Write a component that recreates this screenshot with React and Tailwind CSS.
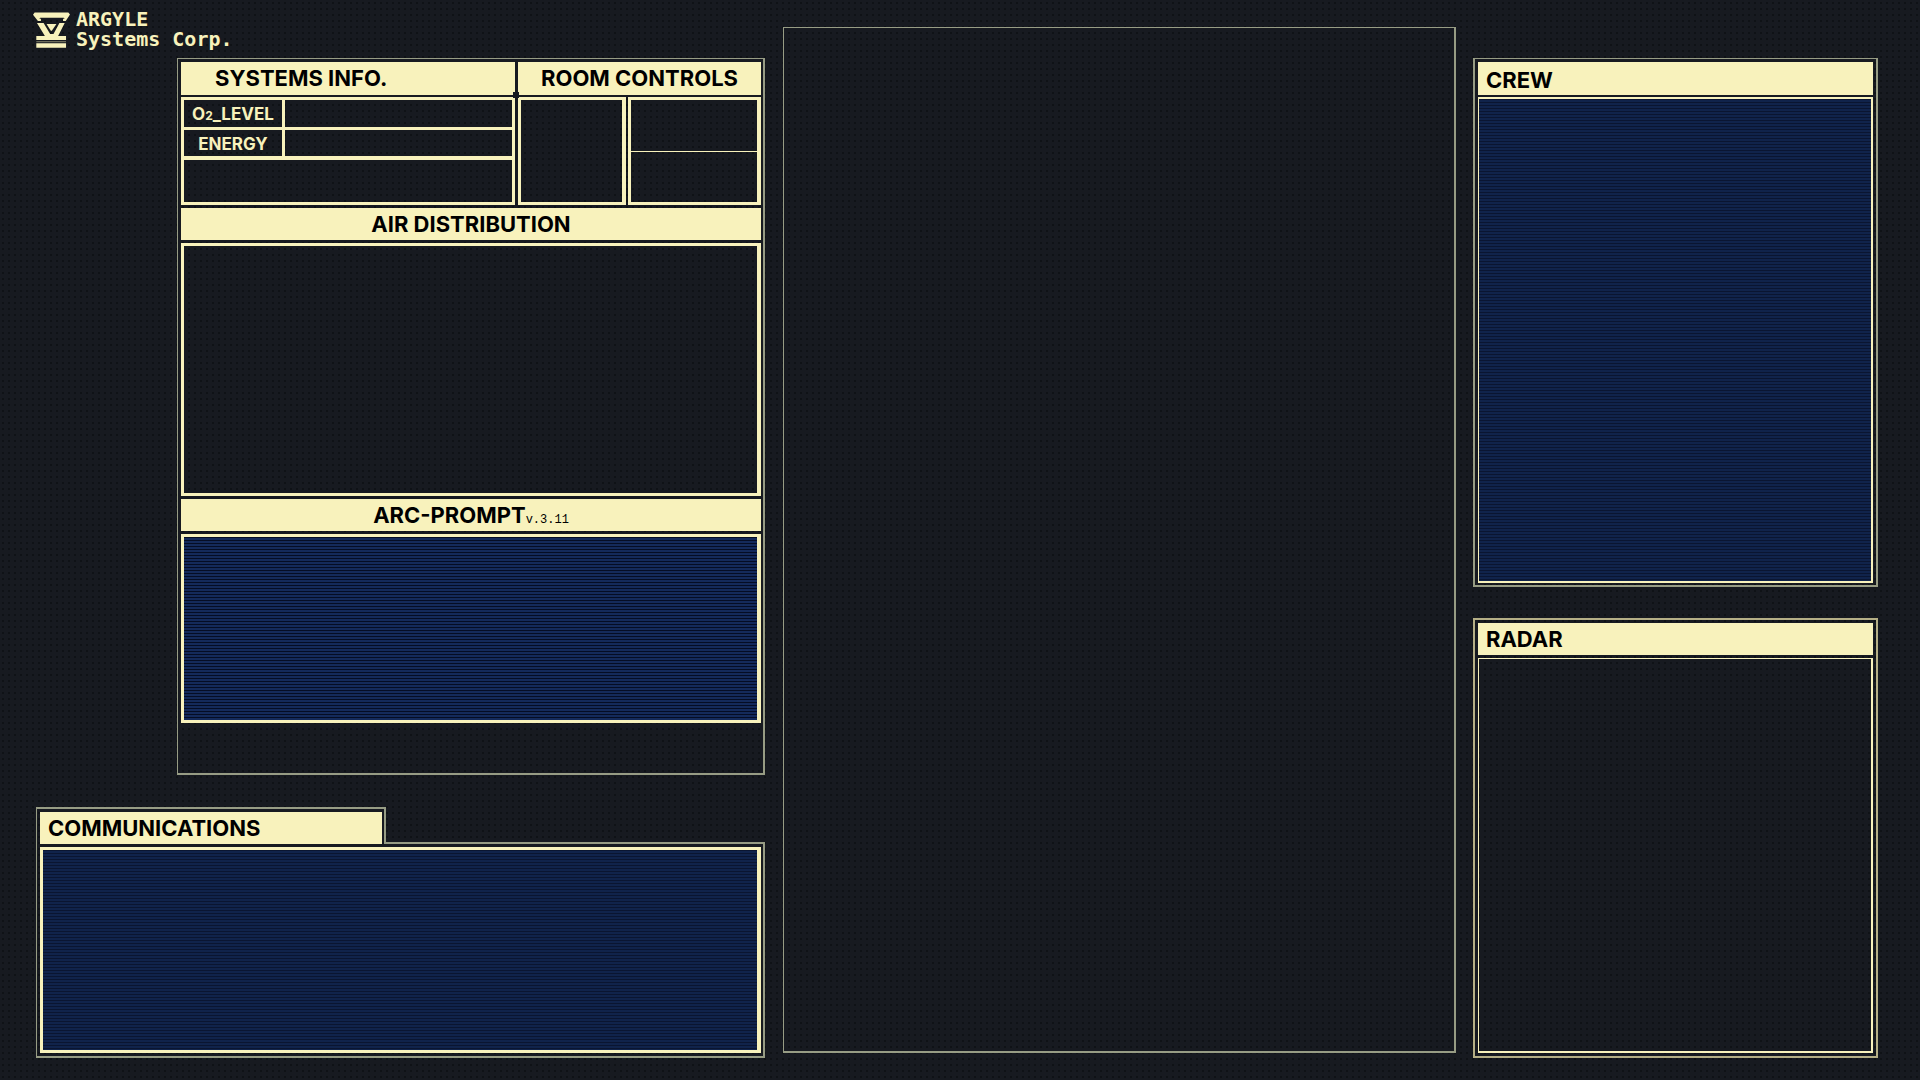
const outline = "border-[#979c84]";
const cream = "border-[#f8f2bc]";
const heading = "bg-[#f8f2bc] text-[22px] leading-8 font-bold text-black";
const brightLines =
  "bg-[repeating-linear-gradient(to_bottom,#050d24_0px_1px,#142a5a_1px_3px)]";
const dimLines =
  "bg-[repeating-linear-gradient(to_bottom,#0a1531_0px_1px,#10234b_1px_3px)]";

function Logo() {
  return (
    <svg viewBox="0 0 112 108" className="h-9 w-[37px] shrink-0 fill-[#f8f2bc]" aria-hidden="true">
      <path d="M5 1H107L112 7L99 27H91V20H96L93 17H22L19 20H24V27H15L0 8Z" />
      <path d="M12 33H32L52 66H62L80 33H96L76 72H36Z" />
      <path d="M41 36H71L57 56H54Z" />
      <path d="M10 72H100V84H10ZM10 94H100V108H10Z" />
      <path d="M10 88H100V91H10Z" opacity="0.5" />
    </svg>
  );
}

function Systems() {
  return (
    <section className={`ml-36 border-t border-l border-r-2 border-b-2 pt-[3px] pr-0.5 pb-[50px] pl-[3px] ${outline}`}>
      <div className="grid grid-cols-[334fr_243fr] gap-x-[3px] gap-y-0.5">
        <h2 className={`${heading} relative h-[33px] pl-[34px]`}>
          SYSTEMS INFO.
          <span className="absolute -right-1 -bottom-[3px] size-1.5 bg-[#171a20]" />
        </h2>
        <h2 className={`${heading} h-[33px] text-center`}>ROOM CONTROLS</h2>
        <div className={`flex h-[108px] flex-col border-[3px] text-[17px] leading-7 font-bold text-[#f8f2bc] ${cream}`}>
          <div className={`flex h-[30px] border-b-[3px] ${cream}`}>
            <div className={`w-[101px] border-r-[3px] text-center ${cream}`}>
              O<span className="text-xs">2</span>_LEVEL
            </div>
          </div>
          <div className={`flex h-[30px] border-b-4 ${cream}`}>
            <div className={`w-[101px] border-r-[3px] text-center ${cream}`}>ENERGY</div>
          </div>
        </div>
        <div className="grid grid-cols-[108fr_133fr] gap-0.5">
          <div className={`border-[3px] border-r-4 ${cream}`} />
          <div className={`grid grid-rows-2 border-[3px] border-r-4 ${cream}`}>
            <div />
            <div className={`border-t ${cream}`} />
          </div>
        </div>
      </div>
      <h2 className={`${heading} mt-[3px] text-center`}>AIR DISTRIBUTION</h2>
      <div className={`mt-[3px] h-[253px] border-[3px] border-r-4 ${cream}`} />
      <h2 className={`${heading} mt-[3px] text-center`}>
        ARC-PROMPT
        <span className="font-['Liberation_Mono',monospace] text-xs font-normal">v.3.11</span>
      </h2>
      <div className={`mt-[3px] h-[189px] border-[3px] border-r-4 ${cream} ${brightLines}`} />
    </section>
  );
}

function Communications() {
  return (
    <section className="mt-8 ml-[3px] flex flex-1 flex-col">
      <div className="flex">
        <div className={`w-[350px] border-t-2 border-r-2 border-l px-[3px] pt-[3px] pr-0.5 ${outline}`}>
          <h2 className={`${heading} pl-2`}>COMMUNICATIONS</h2>
        </div>
        <div className={`flex-1 border-b-2 ${outline}`} />
      </div>
      <div className={`flex flex-1 border-r-2 border-b-2 border-l pt-[3px] pr-0.5 pb-[3px] pl-[3px] ${outline}`}>
        <div className={`flex-1 border-[3px] border-r-4 ${cream} ${dimLines}`} />
      </div>
    </section>
  );
}

export default function App() {
  return (
    <main className="grid min-h-screen grid-cols-[750fr_673fr_422fr] bg-[#171a20] bg-[radial-gradient(circle_at_center,#0f1216_1px,transparent_1.5px)] bg-[size:6px_6px] pr-[42px] pb-[22px] pl-[33px] font-['Inter',sans-serif]">
      <div className="mr-[18px] flex flex-col">
        <header className="flex h-[58px] gap-1.5 pt-3">
          <Logo />
          <h1 className="-mt-[3px] font-['DejaVu_Sans_Mono',monospace] text-xl leading-5 font-bold text-[#f8f2bc]">
            ARGYLE
            <br />
            Systems Corp.
          </h1>
        </header>
        <Systems />
        <Communications />
      </div>
      <div className={`mt-[27px] mb-[5px] border-t border-r-2 border-b-2 border-l ${outline}`} />
      <div className="ml-[17px] flex flex-col pt-[58px]">
        <section className={`flex flex-[521] flex-col border-2 border-t p-[3px] pb-0.5 ${outline}`}>
          <h2 className={`${heading} h-[33px] pt-0.5 pl-2`}>CREW</h2>
          <div className={`mt-0.5 flex-1 border-2 border-l ${cream} ${dimLines}`} />
        </section>
        <section className="mt-[31px] flex flex-[430] flex-col border-2 border-[#b5af86] p-[3px]">
          <h2 className={`${heading} pl-2`}>RADAR</h2>
          <div className={`mt-[3px] flex-1 border-t border-r-2 border-b-2 border-l ${cream}`} />
        </section>
      </div>
    </main>
  );
}
